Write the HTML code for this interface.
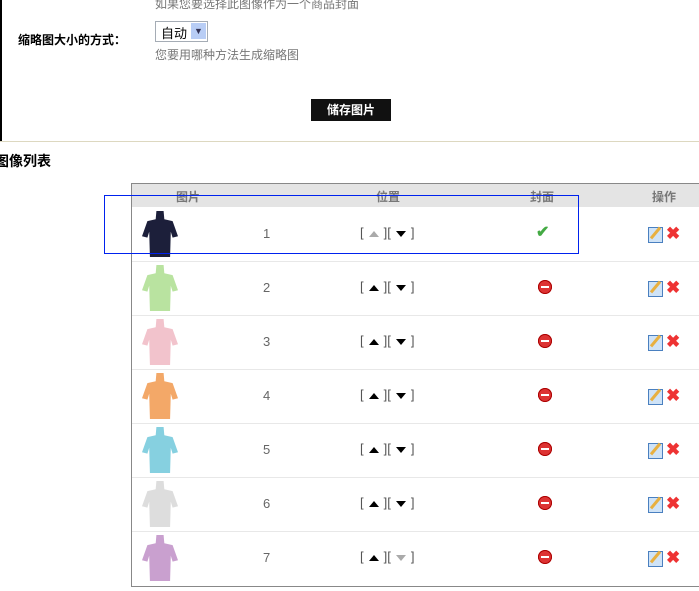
<!DOCTYPE html>
<html><head><meta charset="utf-8"><style>
body{margin:0;width:699px;height:591px;background:#fff;position:relative;overflow:hidden;font-family:"Liberation Sans","Noto Sans CJK SC",sans-serif;}
.a{position:absolute;white-space:nowrap}
.g{color:#777;font-size:12px}
.row{position:absolute;left:132px;width:567px;height:54px;border-bottom:1px solid #e8e8e8}
.shirt{position:absolute;left:10px;top:4px;width:36px;height:46px;clip-path:polygon(40% 0,60% 0,62% 18%,85% 22%,100% 55%,85% 58%,80% 45%,78% 100%,22% 100%,20% 45%,15% 58%,0 55%,15% 22%,38% 18%)}
.num{position:absolute;left:131px;top:19px;font-size:13px;color:#666}
.pos{position:absolute;left:228px;top:18px;font-size:13px;color:#555;word-spacing:0}
.up,.dn{display:inline-block;width:0;height:0;border-left:5px solid transparent;border-right:5px solid transparent;vertical-align:middle;margin:0 5px}
.up{border-bottom:6px solid #000}.dn{border-top:6px solid #000}
.cov{position:absolute;left:406px;top:19px;width:14px;height:14px;border-radius:50%;background:#d33;box-shadow:inset 0 0 0 1px #a00}
.cov:after{content:"";position:absolute;left:3px;top:6px;width:8px;height:2px;background:#fff}
.ed{position:absolute;left:516px;top:20px;width:13px;height:14px;border:1px solid #4a80c0;background:#cfe3f7}
.ed:after{content:"";position:absolute;left:5px;top:-2px;width:3px;height:14px;background:#e8b040;transform:rotate(40deg)}
.x{position:absolute;left:534px;top:17px;color:#e33;font-size:17px;font-weight:bold}
</style></head><body>
<div class="a" style="left:0;top:0;width:2px;height:142px;background:#000"></div>
<div class="a g" style="left:155px;top:-5px">如果您要选择此图像作为一个商品封面</div>
<div class="a" style="left:18px;top:31px;font-size:12px;font-weight:bold">缩略图大小的方式：</div>
<div class="a" style="left:155px;top:21px;width:51px;height:19px;border:1px solid #a5acb5;font-size:13px"><span style="position:absolute;left:5px;top:1px">自动</span><span style="position:absolute;right:1px;top:1px;width:15px;height:16px;background:#b8cdf5;color:#335;font-size:9px;text-align:center;line-height:16px">▼</span></div>
<div class="a g" style="left:155px;top:46px">您要用哪种方法生成缩略图</div>
<div class="a" style="left:311px;top:99px;width:80px;height:22px;background:#111;color:#fff;font-size:12px;font-weight:bold;text-align:center;line-height:22px">储存图片</div>
<div class="a" style="left:0;top:141px;width:699px;height:1px;background:#ddd8c0"></div>
<div class="a" style="left:-5px;top:151px;font-size:14px;font-weight:bold">图像列表</div>
<div class="a" style="left:131px;top:183px;width:570px;height:402px;border:1px solid #888;border-right:none"></div>
<div class="a" style="left:132px;top:184px;width:567px;height:23px;background:#e4e4e4;font-size:12px;font-weight:bold;color:#777">
<span class="a" style="left:44px;top:4px">图片</span><span class="a" style="left:244px;top:4px">位置</span><span class="a" style="left:398px;top:4px">封面</span><span class="a" style="left:520px;top:4px">操作</span></div>
<div class="row" style="top:207px"><div class="shirt" style="background:#1c1f3a"></div><span class="num">1</span><span class="pos">[<span class="up" style="border-bottom-color:#aaa"></span>][<span class="dn"></span>]</span><span class="a" style="left:404px;top:15px;color:#4a4;font-size:16px;font-weight:bold">✔</span><div class="ed"></div><span class="x">✖</span></div>
<div class="row" style="top:261px"><div class="shirt" style="background:#b9e3a0"></div><span class="num">2</span><span class="pos">[<span class="up"></span>][<span class="dn"></span>]</span><div class="cov"></div><div class="ed"></div><span class="x">✖</span></div>
<div class="row" style="top:315px"><div class="shirt" style="background:#f2c3cc"></div><span class="num">3</span><span class="pos">[<span class="up"></span>][<span class="dn"></span>]</span><div class="cov"></div><div class="ed"></div><span class="x">✖</span></div>
<div class="row" style="top:369px"><div class="shirt" style="background:#f3a868"></div><span class="num">4</span><span class="pos">[<span class="up"></span>][<span class="dn"></span>]</span><div class="cov"></div><div class="ed"></div><span class="x">✖</span></div>
<div class="row" style="top:423px"><div class="shirt" style="background:#86d0e0"></div><span class="num">5</span><span class="pos">[<span class="up"></span>][<span class="dn"></span>]</span><div class="cov"></div><div class="ed"></div><span class="x">✖</span></div>
<div class="row" style="top:477px"><div class="shirt" style="background:#ddd"></div><span class="num">6</span><span class="pos">[<span class="up"></span>][<span class="dn"></span>]</span><div class="cov"></div><div class="ed"></div><span class="x">✖</span></div>
<div class="row" style="top:531px;border-bottom:none"><div class="shirt" style="background:#c9a0cf"></div><span class="num">7</span><span class="pos">[<span class="up"></span>][<span class="dn" style="border-top-color:#aaa"></span>]</span><div class="cov"></div><div class="ed"></div><span class="x">✖</span></div>
<div class="a" style="left:104px;top:195px;width:473px;height:57px;border:1px solid #0022ee"></div>
</body></html>
